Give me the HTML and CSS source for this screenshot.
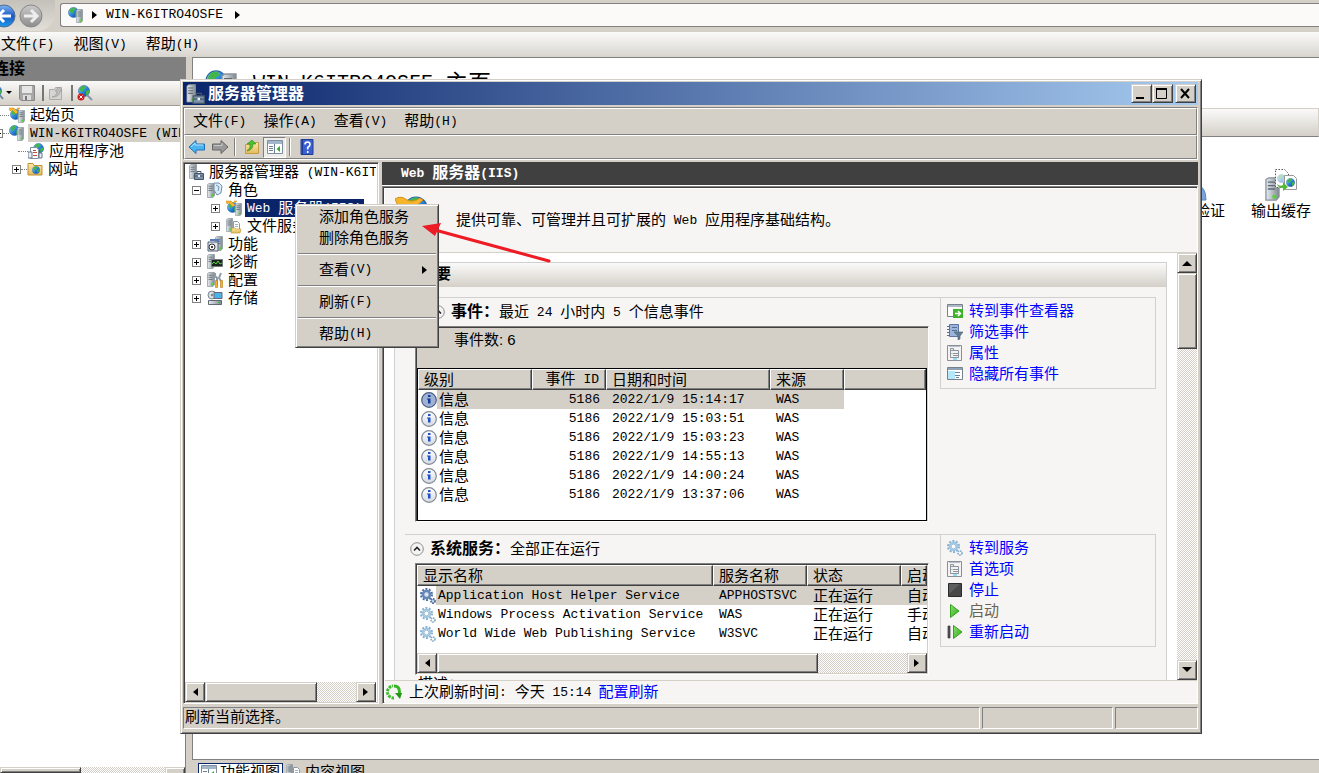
FILE: index.html
```html
<!DOCTYPE html>
<html lang="zh-CN">
<head>
<meta charset="utf-8">
<title>服务器管理器</title>
<link rel="stylesheet" href="styles.css">
</head>
<body>
<svg class="defs" aria-hidden="true">
  <defs>
    <linearGradient id="gGlobe" x1="0" y1="0" x2="1" y2="1"><stop offset="0" stop-color="#9be0ff"/><stop offset=".5" stop-color="#2c86dc"/><stop offset="1" stop-color="#0b3a96"/></linearGradient>
    <linearGradient id="gSrv" x1="0" x2="1"><stop offset="0" stop-color="#e6ebee"/><stop offset=".5" stop-color="#b4bcc2"/><stop offset="1" stop-color="#7c868e"/></linearGradient>
    <linearGradient id="gGrey" x1="0" y1="0" x2="0" y2="1"><stop offset="0" stop-color="#c9c9c9"/><stop offset="1" stop-color="#8d8d8d"/></linearGradient>
    <linearGradient id="gBlue" x1="0" y1="0" x2="0" y2="1"><stop offset="0" stop-color="#7fb6f4"/><stop offset=".5" stop-color="#1c58c4"/><stop offset="1" stop-color="#1d9be8"/></linearGradient>
    <linearGradient id="gGreen" x1="0" y1="0" x2="1" y2="1"><stop offset="0" stop-color="#8be36a"/><stop offset="1" stop-color="#2fa51f"/></linearGradient>
    <linearGradient id="gFold" x1="0" y1="0" x2="0" y2="1"><stop offset="0" stop-color="#fbe9ab"/><stop offset="1" stop-color="#e3b95c"/></linearGradient>
    <linearGradient id="gInfo" x1="0" y1="0" x2="0" y2="1"><stop offset="0" stop-color="#ffffff"/><stop offset="1" stop-color="#d3d8e0"/></linearGradient>
  </defs>
  <symbol id="tower" viewBox="0 0 8 14" preserveAspectRatio="none"><path d="M.5 1.500 2 .5h5.500v11L6 13.500H.5z" fill="url(#gSrv)" stroke="#8a949c" stroke-width=".7"/><path d="M1.500 3h4M1.500 5h4M1.500 7h4" stroke="#5f6a73" stroke-width=".8"/><path d="M4 10.500h2v2H4z" fill="#52d62a"/></symbol>
  <symbol id="globe" viewBox="0 0 12 12"><circle cx="6" cy="6" r="5.500" fill="url(#gGlobe)" stroke="#2a62a8" stroke-width=".6"/><path d="M2 3Q4 0 7 1L8 3 6 4 5 7 3 6Q1 6 2 3M8 6l3-1v3l-3 3z" fill="#43b649"/></symbol>
  <symbol id="globe-server" viewBox="0 0 16 16"><use href="#globe" x="0" y="0" width="11" height="11"/><use href="#tower" x="8" y="2" width="7" height="14"/></symbol>
  <symbol id="web-role" viewBox="0 0 16 16"><use href="#globe" x="1" y="2" width="11" height="11"/><path d="M0 1h5l4 4-2 2-4-4-2 1zM8 1l3 0-2 2z" fill="#f5b52d" stroke="#c98a14" stroke-width=".5"/><use href="#tower" x="9" y="3" width="7" height="13"/></symbol>
  <symbol id="toolbox" viewBox="0 0 16 16"><use href="#tower" x="1" y="0" width="8" height="15"/><path d="M6.500 9.500h9v6h-9z" fill="#7d92a8" stroke="#46566a"/><path d="M9 9V7.500h4V9M7 12h8" fill="none" stroke="#46566a"/><path d="M10 11h2v2h-2z" fill="#e9eef2"/></symbol>
  <symbol id="roles" viewBox="0 0 16 16"><use href="#tower" x="0" y="1" width="8" height="15"/><path d="M7 1h5l3 3-1 7-4 2-3-5z" fill="#dcebf5" stroke="#6c93b0"/><path d="m9 3 3 2-1 4" fill="none" stroke="#6c93b0"/></symbol>
  <symbol id="file-role" viewBox="0 0 16 16"><use href="#tower" x="0" y="0" width="7" height="14"/><path d="M7.500 3.500h4l2 2v6h-6z" fill="#fff" stroke="#8799a8"/><path d="M9 6.500h3M9 8.500h3" stroke="#9db3c6"/><path d="M5 15l1-5h3l1 1h5l-1 4z" fill="url(#gFold)" stroke="#c79a3e" stroke-width=".7"/></symbol>
  <symbol id="features" viewBox="0 0 16 16"><use href="#tower" x="8" y="0" width="8" height="15"/><path d="M1 6h10v9H1z" fill="#dfe5ea" stroke="#4f5f75"/><circle cx="5" cy="11" r="3" fill="#fff" stroke="#333"/><path d="M3 4h8v2" fill="none" stroke="#5a79b8" stroke-width="2"/><circle cx="5" cy="11" r="1"/></symbol>
  <symbol id="diag" viewBox="0 0 16 16"><use href="#tower" x="0" y="0" width="8" height="15"/><path d="M4.500 5.500h11v7h-11z" fill="#18241c" stroke="#747b80"/><path d="M5 10l2-2 2 2 2-3 2 3 2-1" fill="none" stroke="#5bd63c"/></symbol>
  <symbol id="config" viewBox="0 0 16 16"><use href="#tower" x="0" y="0" width="8" height="15"/><path d="M8 1v3l2 2v8M14 1l-2 5 2 3" fill="none" stroke="#8e9ba6" stroke-width="2"/><path d="M8.500 8.500h2v7h-2zM13.500 8.500h2v7h-2z" fill="#f1b32c" stroke="#b77b12" stroke-width=".6"/></symbol>
  <symbol id="storage" viewBox="0 0 16 16"><circle cx="5" cy="5" r="4" fill="#d9dfe3" stroke="#7d878f"/><circle cx="5" cy="5" r="1.200" fill="#7d878f"/><path d="M7 2.500h8v6H7z" fill="#49b4e6" stroke="#667"/><path d="M1.500 10.500h13v4h-13z" fill="url(#gSrv)" stroke="#5f6a73"/><path d="M11 12h2v1h-2z" fill="#2fc71f"/></symbol>
  <symbol id="pool" viewBox="0 0 16 16"><use href="#globe" x="5" y="0" width="11" height="11"/><path d="M2.500 4.500h6l2 2v9h-8z" fill="#fff" stroke="#7e8f9f"/><path d="M0 9h4v6H0zM11 10h3v5h-3z" fill="#e9eef2" stroke="#64788c"/><path d="M5 7.500h3M5 9.500h4M5 12.500h4" stroke="#d04a3a"/></symbol>
  <symbol id="sites" viewBox="0 0 16 16"><path d="M1 2.500h5l1 2h8v9.500H1z" fill="url(#gFold)" stroke="#c0902e"/><use href="#globe" x="5" y="5" width="8" height="8"/></symbol>
  <symbol id="disk" viewBox="0 0 16 16"><path d="M.5.5h15v15H2l-1.500-1.500z" fill="#a8a8a8" stroke="#888"/><path d="M3 1h10v7H3z" fill="#e6e6e6"/><path d="M4 10h8v5H4z" fill="#ddd"/><path d="M6 11h2v4H6z" fill="#777"/></symbol>
  <symbol id="up-grey" viewBox="0 0 16 16"><path d="M1.500 4.500h5l1-2h6v12h-12z" fill="#d6d4d0" stroke="#aaa"/><path d="M4 12q5-1 5-6H7l4-4 3 4h-2q0 6-8 6" fill="#c0beba" stroke="#999" stroke-width=".7"/></symbol>
  <symbol id="up" viewBox="0 0 16 16"><path d="M1.500 5.500h6l1-2h6v11h-13z" fill="url(#gFold)" stroke="#c0902e" stroke-width=".8"/><path d="M3 12q4-3 3-7H3l5-4 4 4H9q0 6-6 7" fill="#4cc02f" stroke="#2d8a1c" stroke-width=".6"/></symbol>
  <symbol id="unlink" viewBox="0 0 16 16"><use href="#globe" x="1" y="0" width="12" height="12"/><path d="m10 10 5 5" stroke="#7f97ad" stroke-width="2"/><circle cx="4" cy="12" r="3.500" fill="#cc1d1d"/><path d="m2.500 10.500 3 3m0-3-3 3" stroke="#fff"/></symbol>
  <symbol id="connect" viewBox="0 0 16 16"><use href="#globe" x="2" y="0" width="12" height="12"/><path d="m11 9 4 5" stroke="#6b86a0" stroke-width="2"/></symbol>
  <symbol id="left" viewBox="0 0 18 16"><path d="M1 8 8 1.500V5h8.500v6H8v3.500z" fill="#4ab4f0" stroke="#1f70b4"/><path d="M3 8l4-4v2h8" fill="none" stroke="#b6e2fb"/></symbol>
  <symbol id="right" viewBox="0 0 18 16"><path d="M17 8l-7-6.500V5H1.500v6H10v3.500z" fill="#999" stroke="#666"/><path d="M3 6.500h8V4" fill="none" stroke="#c8c8c8"/></symbol>
  <symbol id="pane" viewBox="0 0 16 14"><path d="M.5.5h15v13H.5z" fill="#fff" stroke="#7b8ea3"/><path d="M1 1h14v3H1z" fill="#a3b5c8"/><path d="M7.500 4v9M2 6.500h4M2 8.500h4M2 10.500h4" stroke="#6c7f94"/><path d="m13 6-3.500 3L13 12z" fill="#2fae20"/></symbol>
  <symbol id="help" viewBox="0 0 13 16"><path d="M.5.5h12v15H.5z" fill="#3a5fd0" stroke="#213c94"/><path d="M2 1v14" stroke="#1f3a9a"/><path d="M4.500 5.500q0-2.500 2.500-2.500t2.500 2.500Q9.500 7 7.200 8.500v2M7.200 12v2" fill="none" stroke="#fff" stroke-width="1.600"/></symbol>
  <symbol id="goto" viewBox="0 0 16 16"><path d="M.5 1.500h15v12H.5z" fill="#fff" stroke="#77818c"/><path d="M1 2h14v2H1z" fill="#aeb8c6"/><path d="M6 6h10v9H6z" fill="#3db32a"/><path d="M8 10.500h5M11 8l2.500 2.500L11 13" fill="none" stroke="#fff" stroke-width="1.500"/></symbol>
  <symbol id="filter" viewBox="0 0 16 16"><path d="M2.500.5h9v12h-9z" fill="#9bb4dc" stroke="#5d75a4"/><path d="M0 2.500h3M0 5.500h3M0 8.500h3M0 11.500h3M5 3.500h5M5 6.500h5" stroke="#5d6c88"/><path d="M7 8h9l-3 4v3l-2 1v-4z" fill="#607f92" stroke="#49606e" stroke-width=".6"/></symbol>
  <symbol id="props" viewBox="0 0 16 16"><path d="M.5.5h14v15H.5z" fill="#f3f3f3" stroke="#8a8f99"/><path d="M2 1.500h11" stroke="#b8bfcc"/><path d="M3.500 5.500h8v7h-8zM3.500 5.500v-2h3v2M6 8.500h5M6 10.500h5M4.500 8.500h1" fill="none" stroke="#8d939b"/><path d="M6 13.500h4v1H6z" fill="#3cc8f0"/></symbol>
  <symbol id="hide" viewBox="0 0 16 14"><path d="M.5.5h15v12H.5z" fill="#fff" stroke="#77818c"/><path d="M1 1h14v2H1z" fill="#8fa2b8"/><path d="M1 4h7v8H1z" fill="#b5e7fa"/><path d="M8 5.500h5M8 8.500h5M9 10.500h3" stroke="#6e829e"/></symbol>
  <symbol id="gears" viewBox="0 0 16 16"><circle cx="6.500" cy="6.500" r="5.500" fill="none" stroke="#8aafcf" stroke-width="2" stroke-dasharray="2 1.450"/><circle cx="6.500" cy="6.500" r="3.700" fill="#f4fafd" stroke="#9bc6e2" stroke-width="2"/><circle cx="6.500" cy="6.500" r="2.300" fill="#fff" stroke="#7799b6" stroke-width=".6"/><circle cx="13" cy="13" r="2" fill="#fff" stroke="#87abc8" stroke-width="1.600" stroke-dasharray="1.500 .6"/></symbol>
  <symbol id="gears-sel" viewBox="0 0 16 16"><circle cx="6.500" cy="6.500" r="5.500" fill="none" stroke="#4f6fa0" stroke-width="2" stroke-dasharray="2 1.450"/><circle cx="6.500" cy="6.500" r="3.500" fill="#dce4ee" stroke="#6486b8" stroke-width="2.600"/><circle cx="13" cy="13" r="2" fill="#cdd8e6" stroke="#4f6fa0" stroke-width="1.800" stroke-dasharray="1.500 .6"/></symbol>
  <symbol id="stop" viewBox="0 0 16 16"><path d="M1.500 1.500h13v13h-13z" fill="#484848" stroke="#2b2b2b"/><path d="M2 12 13 2H2z" fill="#5e5e5e"/></symbol>
  <symbol id="play" viewBox="0 0 16 16"><path d="M3.500 1.500 12 8l-8.500 6.500z" fill="url(#gGreen)" stroke="#35a022"/></symbol>
  <symbol id="restart" viewBox="0 0 16 16"><path d="M1 2h2v12H1z" fill="#555" stroke="#333" stroke-width=".7"/><path d="M6.500 1.500 15 8l-8.500 6.500z" fill="url(#gGreen)" stroke="#35a022"/></symbol>
  <symbol id="refresh" viewBox="0 0 16 16"><path d="M8 14A6 6 0 0 1 7 2" fill="none" stroke="#3dbb2c" stroke-width="3" stroke-dasharray="2.500 1"/><path d="M8 2q6 0 5.500 7" fill="none" stroke="#35b524" stroke-width="3"/><path d="M9 9h7l-2 6z" fill="#24951a"/></symbol>
  <symbol id="info" viewBox="0 0 16 16"><circle cx="8" cy="8" r="7.300" fill="url(#gInfo)" stroke="#808894" stroke-width="1.200"/><path d="M7 3h2.500v2H7zM6 6.500h3.500v5H7v-4H6z" fill="#1e50c8"/></symbol>
  <symbol id="info-sel" viewBox="0 0 16 16"><circle cx="8" cy="8" r="7.300" fill="#a0b2d4" stroke="#4c5c80" stroke-width="1.200"/><path d="M7 3h2.500v2H7zM6 6.500h3.500v5H7v-4H6z" fill="#123c9c"/></symbol>
  <symbol id="chev" viewBox="0 0 14 14"><circle cx="7" cy="7" r="6.300" fill="#f4f4f4" stroke="#8c8c8c"/><path d="m4 8.500 3-3 3 3" fill="none" stroke="#222" stroke-width="1.600"/></symbol>
  <symbol id="cache" viewBox="0 0 34 32"><use href="#tower" x="1" y="8" width="15" height="24"/><path d="M11.500.5h9l4 4v14h-13z" fill="#fff" stroke="#555" stroke-dasharray="1.500 1.500"/><use href="#globe" x="13" y="5" width="9" height="9" opacity=".4"/><path d="M20.500 6.500h9l3 3v11h-12z" fill="#fff" stroke="#999"/><use href="#globe" x="22" y="9" width="9" height="9"/><path d="M13 15q3 3 6 1v-3l5 5-5 4v-3q-5 0-6-4" fill="#55b838"/></symbol>
  <symbol id="person" viewBox="0 0 32 32"><circle cx="15" cy="9" r="7" fill="#d9dde2" stroke="#aab"/><path d="M5 31q0-15 11-15t11 15z" fill="#7ba5d8" stroke="#5985c0"/></symbol>
  <symbol id="big-home" viewBox="0 0 34 32"><use href="#globe" x="0" y="0" width="22" height="22"/><use href="#tower" x="16" y="3" width="16" height="27"/></symbol>
  <symbol id="bigweb" viewBox="0 0 34 32"><use href="#globe" x="9" y="0" width="24" height="24"/><path d="M0 3Q6-1 12 4q6 3 13-2l3 2Q19 14 8 9L4 12z" fill="#f6b62c" stroke="#d48f14"/></symbol>
  <symbol id="tri" viewBox="0 0 6 8"><path d="M0 0v8l5-4z"/></symbol>
</svg>

<div class="iis">
  <div class="nav">
    <div class="nav-btns">
      <button class="round blue" aria-label="后退"><svg viewBox="0 0 24 24"><circle cx="12" cy="12" r="11" fill="url(#gBlue)" stroke="#4f6a92"/><path d="M19 12H7m5-6-6 6 6 6" fill="none" stroke="#fff" stroke-width="3"/></svg></button>
      <button class="round" aria-label="前进"><svg viewBox="0 0 24 24"><circle cx="12" cy="12" r="11" fill="url(#gGrey)" stroke="#888"/><path d="M5 12h12m-5-6 6 6-6 6" fill="none" stroke="#eee" stroke-width="3"/></svg></button>
    </div>
    <div class="address">
      <svg class="i16"><use href="#globe-server"/></svg><svg class="tri"><use href="#tri"/></svg><span class="m">WIN-K6ITRO4OSFE</span><svg class="tri"><use href="#tri"/></svg>
    </div>
  </div>
  <div class="iis-menu">
    <button>文件<span class="m">(F)</span></button><button>视图<span class="m">(V)</span></button><button>帮助<span class="m">(H)</span></button>
  </div>
  <div class="iis-body">
    <div class="conn">
      <div class="conn-head">连接</div>
      <div class="conn-tools">
        <svg class="i16"><use href="#connect"/></svg><svg class="caret" viewBox="0 0 6 4"><path d="M0 0h6L3 3z"/></svg>
        <svg class="i16"><use href="#disk"/></svg><span class="vbar"></span><svg class="i16"><use href="#up-grey"/></svg><span class="vbar"></span><svg class="i16"><use href="#unlink"/></svg>
      </div>
      <div class="conn-tree">
        <div class="row r0"><span class="dots"></span><svg class="i16"><use href="#web-role"/></svg><span class="lbl">起始页</span></div>
        <div class="row r0"><span class="exp cut"></span><span class="dots"></span><svg class="i16"><use href="#globe-server"/></svg><span class="lbl sel"><span class="m">WIN-K6ITRO4OSFE (WIN-K6ITRO4OSFE)</span></span></div>
        <div class="row r1"><span class="dots wide"></span><svg class="i16"><use href="#pool"/></svg><span class="lbl">应用程序池</span></div>
        <div class="row r1"><span class="exp plus"></span><span class="dots"></span><svg class="i16"><use href="#sites"/></svg><span class="lbl">网站</span></div>
      </div>
      <div class="hbar low"><span class="raised thumb"></span><span class="rest"></span><button class="raised sb" aria-label="右"><svg class="tri"><use href="#tri"/></svg></button></div>
    </div>
    <div class="home">
      <div class="home-page">
        <div class="home-title"><svg><use href="#big-home"/></svg><h1><span class="m">WIN-K6ITRO4OSFE </span>主页</h1></div>
        <div class="home-filter"></div>
        <div class="home-items">
          <div class="item"><svg><use href="#person"/></svg><span>身份验证</span></div>
          <div class="item"><svg><use href="#cache"/></svg><span>输出缓存</span></div>
        </div>
      </div>
      <div class="tabs"><button class="tab on"><svg class="i16"><use href="#pane"/></svg>功能视图</button><button class="tab"><svg class="i16"><use href="#file-role"/></svg>内容视图</button></div>
    </div>
  </div>
</div>

<div class="win">
  <div class="title"><svg><use href="#toolbox"/></svg><span>服务器管理器</span>
    <div class="wbtns"><button class="raised" aria-label="最小化"><svg viewBox="0 0 16 16"><path d="M3 11h8v2H3z"/></svg></button><button class="raised" aria-label="最大化"><svg viewBox="0 0 16 16"><path d="M2.500 3v9.500h10V3" fill="none" stroke="#000"/><path d="M2 2h11v2H2z"/></svg></button><button class="raised close" aria-label="关闭"><svg viewBox="0 0 16 16"><path d="m4 3 8 9m0-9-8 9" stroke="#000" stroke-width="2"/></svg></button></div>
  </div>
  <div class="bars">
    <div class="menubar"><button>文件<span class="m">(F)</span></button><button>操作<span class="m">(A)</span></button><button>查看<span class="m">(V)</span></button><button>帮助<span class="m">(H)</span></button></div>
    <div class="toolbar">
      <button aria-label="后退"><svg class="i18"><use href="#left"/></svg></button><button aria-label="前进"><svg class="i18"><use href="#right"/></svg></button><span class="vsep"></span><button aria-label="向上"><svg class="i16"><use href="#up"/></svg></button><button class="pressed" aria-label="显示/隐藏控制台树"><svg class="i16"><use href="#pane"/></svg></button><span class="vsep"></span><button aria-label="帮助"><svg class="i16"><use href="#help"/></svg></button>
    </div>
  </div>
  <div class="panes">
    <div class="sunk left">
      <div class="tree">
        <div class="row t0"><svg class="i16"><use href="#toolbox"/></svg><span class="lbl">服务器管理器<span class="m"> (WIN-K6ITRO4OSFE)</span></span></div>
        <div class="row t1"><span class="exp"></span><svg class="i16"><use href="#roles"/></svg><span class="lbl">角色</span></div>
        <div class="row t2"><span class="exp plus"></span><svg class="i16"><use href="#web-role"/></svg><span class="lbl hot"><span class="m">Web </span>服务器<span class="m">(IIS)</span></span></div>
        <div class="row t2"><span class="exp plus"></span><svg class="i16"><use href="#file-role"/></svg><span class="lbl">文件服务</span></div>
        <div class="row t1"><span class="exp plus"></span><svg class="i16"><use href="#features"/></svg><span class="lbl">功能</span></div>
        <div class="row t1"><span class="exp plus"></span><svg class="i16"><use href="#diag"/></svg><span class="lbl">诊断</span></div>
        <div class="row t1"><span class="exp plus"></span><svg class="i16"><use href="#config"/></svg><span class="lbl">配置</span></div>
        <div class="row t1"><span class="exp plus"></span><svg class="i16"><use href="#storage"/></svg><span class="lbl">存储</span></div>
      </div>
      <div class="hbar"><button class="raised sb" aria-label="左"><svg class="tri flip"><use href="#tri"/></svg></button><span class="raised thumb"></span><span class="rest"></span><button class="raised sb" aria-label="右"><svg class="tri"><use href="#tri"/></svg></button></div>
    </div>
    <div class="right">
      <div class="pane-head"><span class="m">Web </span>服务器<span class="m">(IIS)</span></div>
      <div class="sunk detail">
        <div class="intro"><svg><use href="#bigweb"/></svg><p>提供可靠、可管理并且可扩展的<span class="m"> Web </span>应用程序基础结构。</p></div>
        <div class="scroll">
          <div class="sheet">
            <h2>摘要</h2>
            <section class="sec">
              <div class="main">
                <div class="sec-title shift"><svg class="i14"><use href="#chev"/></svg><b>事件：</b><span>最近<span class="m"> 24 </span>小时内<span class="m"> 5 </span>个信息事件</span></div>
                <div class="sunk box events">
                  <div class="count">事件数: 6</div>
                  <div class="grid-wrap">
                    <table class="grid">
                      <colgroup><col class="c1"><col class="c2"><col class="c3"><col class="c4"><col></colgroup>
                      <thead><tr><th>级别</th><th class="num">事件<span class="m"> ID</span></th><th>日期和时间</th><th>来源</th><th></th></tr></thead>
                      <tbody>
                        <tr class="cur"><td><div class="cell"><svg class="i16"><use href="#info-sel"/></svg><span>信息</span></div></td><td class="num m">5186</td><td class="m">2022/1/9 15:14:17</td><td class="m">WAS</td><td></td></tr>
                        <tr><td><div class="cell"><svg class="i16"><use href="#info"/></svg><span>信息</span></div></td><td class="num m">5186</td><td class="m">2022/1/9 15:03:51</td><td class="m">WAS</td><td></td></tr>
                        <tr><td><div class="cell"><svg class="i16"><use href="#info"/></svg><span>信息</span></div></td><td class="num m">5186</td><td class="m">2022/1/9 15:03:23</td><td class="m">WAS</td><td></td></tr>
                        <tr><td><div class="cell"><svg class="i16"><use href="#info"/></svg><span>信息</span></div></td><td class="num m">5186</td><td class="m">2022/1/9 14:55:13</td><td class="m">WAS</td><td></td></tr>
                        <tr><td><div class="cell"><svg class="i16"><use href="#info"/></svg><span>信息</span></div></td><td class="num m">5186</td><td class="m">2022/1/9 14:00:24</td><td class="m">WAS</td><td></td></tr>
                        <tr><td><div class="cell"><svg class="i16"><use href="#info"/></svg><span>信息</span></div></td><td class="num m">5186</td><td class="m">2022/1/9 13:37:06</td><td class="m">WAS</td><td></td></tr>
                      </tbody>
                    </table>
                  </div>
                </div>
              </div>
              <div class="links">
                <a href="#"><svg class="i16"><use href="#goto"/></svg>转到事件查看器</a>
                <a href="#"><svg class="i16"><use href="#filter"/></svg>筛选事件</a>
                <a href="#"><svg class="i16"><use href="#props"/></svg>属性</a>
                <a href="#"><svg class="i16"><use href="#hide"/></svg>隐藏所有事件</a>
              </div>
            </section>
            <section class="sec">
              <div class="main">
                <div class="sec-title"><svg class="i14"><use href="#chev"/></svg><b>系统服务：</b><span>全部正在运行</span></div>
                <div class="sunk box services">
                  <table class="grid">
                    <colgroup><col class="s1"><col class="s2"><col class="s3"><col></colgroup>
                    <thead><tr><th>显示名称</th><th>服务名称</th><th>状态</th><th>启动类型</th></tr></thead>
                    <tbody>
                      <tr class="cur"><td><div class="cell"><svg class="i16"><use href="#gears-sel"/></svg><span class="m">Application Host Helper Service</span></div></td><td class="m">APPHOSTSVC</td><td>正在运行</td><td>自动</td></tr>
                      <tr><td><div class="cell"><svg class="i16"><use href="#gears"/></svg><span class="m">Windows Process Activation Service</span></div></td><td class="m">WAS</td><td>正在运行</td><td>手动</td></tr>
                      <tr><td><div class="cell"><svg class="i16"><use href="#gears"/></svg><span class="m">World Wide Web Publishing Service</span></div></td><td class="m">W3SVC</td><td>正在运行</td><td>自动</td></tr>
                    </tbody>
                  </table>
                  <div class="hbar"><button class="raised sb" aria-label="左"><svg class="tri flip"><use href="#tri"/></svg></button><span class="raised thumb"></span><span class="rest"></span><button class="raised sb" aria-label="右"><svg class="tri"><use href="#tri"/></svg></button></div>
                </div>
                <div class="desc">描述：</div>
              </div>
              <div class="links">
                <a href="#"><svg class="i16"><use href="#gears"/></svg>转到服务</a>
                <a href="#"><svg class="i16"><use href="#props"/></svg>首选项</a>
                <a href="#"><svg class="i16"><use href="#stop"/></svg>停止</a>
                <a class="off"><svg class="i16"><use href="#play"/></svg>启动</a>
                <a href="#"><svg class="i16"><use href="#restart"/></svg>重新启动</a>
              </div>
            </section>
          </div>
          <div class="vscroll"><button class="raised sb" aria-label="上"><svg viewBox="0 0 10 6"><path d="M0 6h10L5 1z"/></svg></button><span class="raised thumb"></span><span class="rest"></span><button class="raised sb" aria-label="下"><svg viewBox="0 0 10 6"><path d="M0 0h10L5 5z"/></svg></button></div>
        </div>
        <div class="foot"><svg class="i16"><use href="#refresh"/></svg><span>上次刷新时间<span class="m">: </span>今天<span class="m"> 15:14</span></span><a href="#">配置刷新</a></div>
      </div>
    </div>
  </div>
  <div class="status"><span class="st1">刷新当前选择。</span><span class="st2"></span><span class="st3"></span></div>
</div>

<div class="ctx raised">
  <button>添加角色服务</button><button>删除角色服务</button><hr>
  <button>查看<span class="m">(V)</span><svg class="tri"><use href="#tri"/></svg></button><hr>
  <button>刷新<span class="m">(F)</span></button><hr>
  <button>帮助<span class="m">(H)</span></button>
</div>
<svg class="pointer" viewBox="0 0 132 44" aria-hidden="true"><path d="M14 9 128 40" stroke="#ed1c24" stroke-width="3" stroke-linecap="round"/><path d="M1 5 20 2 14 15z" fill="#ed1c24"/></svg>
</body>
</html>
```
FILE: styles.css
```css
* { box-sizing: border-box; }
html, body { height: 100%; }
body {
  margin: 0; overflow: hidden; position: relative; background: #d4d0c8; color: #000;
  font-family: "Liberation Sans", "Noto Sans CJK SC", sans-serif; font-size: 15px; line-height: 18px;
}
button { border: 0; margin: 0; padding: 0; background: none; font: inherit; color: inherit; white-space: nowrap; }
svg { display: block; flex: none; }
a { color: #0000ff; text-decoration: none; }
.defs { position: absolute; width: 0; height: 0; }
.m { font-family: "Liberation Mono", monospace; font-size: 13px; white-space: pre; }
span.m { vertical-align: 1px; }
.i14 { width: 14px; height: 14px; }
.i16 { width: 16px; height: 16px; }
.i18 { width: 18px; height: 16px; }
.tri { width: 6px; height: 8px; }
.flip { transform: scaleX(-1); }

.raised { background: #d4d0c8; border: 1px solid; border-color: #d4d0c8 #404040 #404040 #d4d0c8; box-shadow: inset 1px 1px #fff, inset -1px -1px #808080; }
.sunk { background: #fff; border: 1px solid; border-color: #808080 #fff #fff #808080; box-shadow: inset 1px 1px #404040, inset -1px -1px #d4d0c8; padding: 2px; }

/* scroll bars */
.hbar { display: flex; height: 20px; }
.sb { width: 20px; height: 20px; display: flex; align-items: center; justify-content: center; flex: none; }
.sb svg:not(.tri) { width: 10px; height: 6px; }
.rest { flex: 1; background: repeating-conic-gradient(#d4d0c8 0 25%, #fff 0 50%) 0 0 / 2px 2px; }

/* IIS manager */
.iis { height: 100%; display: flex; flex-direction: column; }
.nav { display: flex; height: 32px; padding: 3px 0 5px; flex: none; }
.nav-btns { display: flex; gap: 3px; width: 55px; margin: -3px 5px -4px 0; align-items: center; background: linear-gradient(#c4c1ba, #e2dfd8); border-radius: 0 0 18px 0; }
.round { width: 24px; height: 24px; flex: none; }
.round svg { width: 24px; height: 24px; }
.round.blue { margin-left: -8px; }
.address { flex: 1; display: flex; align-items: center; gap: 8px; padding-left: 7px; background: #fbfaf9; border: 1px solid #808080; border-right: 0; border-radius: 3px 0 0 3px; }
.address .m + .tri { margin-left: 4px; }
.iis-menu { display: flex; gap: 19px; height: 25px; flex: none; padding-left: 1px; background: linear-gradient(#fafaf9, #d8d5cf); }
.iis-body { flex: 1; min-height: 0; display: flex; gap: 6px; }
.conn { width: 186px; display: flex; flex-direction: column; border-right: 1px solid #808080; background: #fff; overflow: hidden; }
.conn-head { height: 24px; background: #808080; font-weight: bold; font-size: 16px; line-height: 24px; margin-left: -7px; }
.conn-tools { height: 25px; display: flex; align-items: center; gap: 7px; background: linear-gradient(#fafaf9, #d4d0c8); border-bottom: 1px solid #a09d96; }
.conn-tools .i16:first-child { margin-left: -12px; }
.conn-tools .caret { width: 6px; height: 4px; margin-left: -5px; }
.vbar { width: 2px; height: 16px; margin-right: -3px; background: #777; }
.conn-tree { flex: 1; background: #fff; }
.row { display: flex; align-items: center; height: 18px; white-space: nowrap; }
.row .lbl { padding: 0 2px; margin-left: 3px; height: 18px; line-height: 18px; }
.row.r0 .dots { width: 9px; }
.row.r0 .cut + .dots { width: 6px; }
.row.r1 { padding-left: 12px; }
.dots { width: 6px; border-top: 1px dotted #808080; flex: none; }
.dots.wide { width: 10px; margin-left: 6px; }
.sel { background: #d4d0c8; }
.exp { width: 9px; height: 9px; flex: none; border: 1px solid #808080; background: linear-gradient(#000, #000) center / 5px 1px no-repeat; }
.exp.plus { background: linear-gradient(#000, #000) center / 5px 1px no-repeat, linear-gradient(#000, #000) center / 1px 5px no-repeat; }
.exp.cut { margin-left: -6px; }
.hbar.low { height: 6px; overflow: hidden; }
.low .thumb { width: 81px; }
.home { flex: 1; display: flex; flex-direction: column; min-width: 0; }
.home-page { flex: 1; background: #fff; border: 1px solid #808080; border-right: 0; padding: 12px 0 0 12px; }
.home-title { display: flex; gap: 14px; height: 38px; }
.home-title svg { width: 34px; height: 32px; }
.home-title h1 { margin: 0; font-size: 23px; font-weight: normal; line-height: 26px; }
.home-title .m { font-size: 20px; vertical-align: 3px; }
.home-filter { height: 29px; background: linear-gradient(#fafaf9, #d4d0c8); border: 1px solid #d4d0c8; border-bottom-color: #808080; }
.home-items { display: flex; justify-content: flex-end; gap: 26px; padding: 32px 8px 0 0; }
.item { display: flex; flex-direction: column; align-items: center; gap: 1px; }
.item svg { width: 34px; height: 32px; }
.tabs { height: 13px; overflow: hidden; padding: 3px 0 0 6px; display: flex; align-items: flex-start; }
.tab { display: flex; gap: 3px; padding: 0 2px; border: 1px solid transparent; line-height: 16px; }
.tab.on { background: #fff; border-color: #0a246a; }

/* server manager window */
.win { position: absolute; left: 180px; top: 79px; right: 117px; bottom: 39px; display: flex; flex-direction: column; padding: 2px 3px 4px 2px; background: #d4d0c8; border: 1px solid; border-color: #d4d0c8 #404040 #404040 #d4d0c8; box-shadow: inset 1px 1px #fff, inset -1px -1px #808080; }
.title { height: 23px; flex: none; display: flex; align-items: center; gap: 3px; padding: 0 2px; background: linear-gradient(90deg, #0a246a, #a6caf0); color: #fff; font-weight: bold; font-size: 16px; }
.title > svg { width: 20px; height: 20px; }
.wbtns { display: flex; margin-left: auto; }
.wbtns button { width: 21px; height: 19px; padding: 1px; }
.wbtns svg { width: 16px; height: 16px; }
.wbtns .close { margin-left: 2px; }
.bars { flex: none; margin-top: 2px; border: 1px solid; border-color: #808080 #fff #fff #808080; }
.menubar { height: 27px; display: flex; gap: 17px; padding-left: 8px; border: 1px solid; border-color: #fff #808080 #808080 #fff; }
.toolbar { height: 24px; display: flex; align-items: center; border: 1px solid; border-color: #fff #808080 #808080 #fff; }
.toolbar button { height: 21px; width: 23px; display: flex; align-items: center; justify-content: center; }
.toolbar .pressed { border: 1px solid; border-color: #808080 #fff #fff #808080; background: #efedea; }
.vsep { width: 2px; height: 18px; margin: 0 3px; border-left: 1px solid #808080; border-right: 1px solid #fff; }
.toolbar .vsep + button { margin-left: 1px; }
.panes { flex: 1; min-height: 0; display: flex; gap: 3px; margin-top: 2px; }
.left { width: 196px; display: flex; flex-direction: column; padding: 0 2px 1px 1px; }
.tree { flex: 1; overflow: hidden; }
.left .row { min-width: 0; }
.left .row .lbl { flex: none; }
.t0 { padding-left: 3px; }
.t1 { padding-left: 7px; }
.t2 { padding-left: 26px; }
.exp + .i16 { margin-left: 6px; }
.hot { background: #0a246a; color: #fff; }
.left .thumb { width: 112px; }
.right { flex: 1; min-width: 0; display: flex; flex-direction: column; }
.pane-head { height: 24px; line-height: 22px; padding-left: 19px; background: #404040; color: #fff; font-weight: bold; font-size: 16px; border-bottom: 1px solid #fff; }
.detail { flex: 1; min-height: 0; display: flex; flex-direction: column; padding: 2px 0 0 2px; }
.intro { height: 64px; flex: none; display: flex; gap: 27px; padding: 7px 0 0 10px; background: #f6f5f4; border-bottom: 1px solid #d4d0c8; }
.intro svg { width: 34px; height: 32px; }
.intro p { margin: 0; line-height: 48px; }
.scroll { flex: 1; min-height: 0; display: flex; gap: 10px; padding-left: 9px; overflow: hidden; }
.sheet { flex: 1; min-width: 0; margin-top: 9px; height: 600px; background: #f6f5f4; border: 1px solid #d0d0d0; }
.sheet h2 { margin: 0; height: 24px; line-height: 22px; padding-left: 26px; font-size: 15px; background: linear-gradient(#fafaf9, #d4d0c8); }
.sec { display: flex; align-items: flex-start; gap: 11px; margin: 10px 10px 12px; }
.main { flex: 1; min-width: 0; border-top: 1px solid #d0d0d0; margin-right: -11px; padding: 0 11px 0 10px; }
.links { width: 216px; border: 1px solid #d0d0d0; padding: 2px 6px 4px; }
.links a { display: flex; align-items: center; gap: 6px; height: 21px; }
.links .off { color: #6b6350; }
.sec-title { display: flex; align-items: center; gap: 6px; height: 28px; margin-left: -5px; white-space: nowrap; }
.sec-title b { font-size: 16px; margin-right: -6px; }
.sec-title.shift { padding-left: 21px; }
.box { overflow: hidden; padding: 1px; }
.events { height: 196px; background: #d4d0c8; }
.count { height: 40px; padding: 3px 0 0 37px; }
.grid-wrap { height: 153px; background: #fff; border: 1px solid #000; }
.services { height: 112px; display: flex; flex-direction: column; justify-content: space-between; }
.services .thumb { width: 381px; }
.grid { width: 100%; table-layout: fixed; border-collapse: separate; border-spacing: 0; white-space: nowrap; }
.grid th { height: 21px; padding: 0 5px; text-align: left; font-weight: normal; line-height: 18px; background: #d4d0c8; border: 1px solid; border-color: #fff #404040 #404040 #fff; box-shadow: inset -1px -1px #808080; overflow: hidden; }
.grid td { height: 19px; padding: 0 6px; line-height: 19px; overflow: hidden; }
.grid .num { text-align: right; padding-right: 6px; }
.cell { display: flex; align-items: center; height: 19px; margin-left: -3px; }
.cell span { flex: 1; padding-left: 2px; margin-right: -6px; }
.cur td:not(:first-child):not(:nth-child(5)), .cur .cell span { background: #d4d0c8; }
.c1 { width: 114px; } .c2 { width: 74px; } .c3 { width: 164px; } .c4 { width: 74px; }
.s1 { width: 296px; } .s2 { width: 94px; } .s3 { width: 94px; }
.desc { padding-left: 3px; line-height: 18px; }
.vscroll { width: 20px; display: flex; flex-direction: column; }
.vscroll .thumb { height: 76px; }
.foot { height: 23px; flex: none; display: flex; align-items: center; gap: 7px; padding-left: 1px; background: #f6f5f4; border-top: 1px solid #d4d0c8; }
.status { height: 22px; flex: none; display: flex; gap: 2px; margin-top: 3px; }
.status span { border: 1px solid; border-color: #808080 #fff #fff #808080; padding-left: 1px; }
.st1 { flex: 1; }
.st2 { width: 131px; }
.st3 { width: 83px; }

/* context menu */
.ctx { position: absolute; left: 295px; top: 204px; width: 144px; padding: 1px 2px 3px; display: flex; flex-direction: column; }
.ctx button { display: flex; align-items: center; height: 21px; padding: 0 8px 0 21px; }
.ctx .tri { margin-left: auto; }
.ctx hr { width: 100%; height: 2px; margin: 5px 0 4px; border: 0; border-top: 1px solid #808080; border-bottom: 1px solid #fff; }
.pointer { position: absolute; left: 421px; top: 221px; width: 132px; height: 44px; }
```
